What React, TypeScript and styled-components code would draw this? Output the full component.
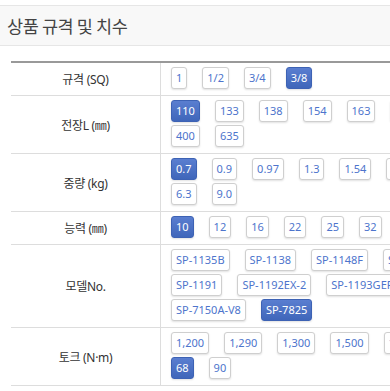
import React from "react";
import styled, { createGlobalStyle } from "styled-components";

const GlobalStyle = createGlobalStyle`
  html, body {
    margin: 0;
    padding: 0;
    background: #ffffff;
    overflow: hidden;
  }
  body {
    font-family: "Noto Sans", "Noto Sans CJK KR", sans-serif;
    color: #333333;
  }
`;

const Page = styled.div`
  width: 390px;
  padding-top: 5px;
  overflow: hidden;
`;

const TitleBar = styled.header`
  height: 39px;
  display: flex;
  align-items: center;
  padding-left: 7px;
  background: #f8f8f8;
  border-top: 1px solid #e6e6e6;
  border-bottom: 1px solid #e6e6e6;
`;

const Title = styled.h2`
  margin: 0;
  font-family: "Noto Sans CJK KR", sans-serif;
  font-size: 17.5px;
  font-weight: 400;
  letter-spacing: -0.4px;
  color: #444444;
`;

const SpecTable = styled.div`
  width: 573px;
  margin: 15px 0 0 11px;
  border-top: 2px solid #999999;
`;

const SpecRow = styled.div`
  display: grid;
  grid-template-columns: 150px 1fr;
  border-bottom: 1px solid #dddddd;
`;

const LabelCell = styled.div`
  display: flex;
  align-items: center;
  justify-content: center;
  border-right: 1px solid #dddddd;
  font-family: "Noto Sans", "Noto Sans CJK KR", sans-serif;
  font-size: 12px;
  color: #333333;
  letter-spacing: -0.3px;
`;

const ValueCell = styled.div`
  display: flex;
  flex-wrap: wrap;
  align-content: flex-start;
  gap: 3px 15px;
  padding: 4px 10px 6px 10px;
`;

const OptionButton = styled.button<{ $active?: boolean }>`
  height: 22px;
  padding: 0 4px;
  box-sizing: border-box;
  border-radius: 3px;
  font-family: "Noto Sans", sans-serif;
  font-size: 11px;
  line-height: 20px;
  white-space: nowrap;
  cursor: pointer;
  border: 1px solid ${(p) => (p.$active ? "#3d62b4" : "#cfcfcf")};
  background: ${(p) =>
    p.$active ? "linear-gradient(#5a7ed0, #3f66ba)" : "#ffffff"};
  color: ${(p) => (p.$active ? "#ffffff" : "#4d74cc")};
  box-shadow: 0 1px 2px rgba(0, 0, 0, 0.12);
`;

type Spec = { label: string; values: string[]; active: string };

const specs: Spec[] = [
  { label: "규격 (SQ)", values: ["1", "1/2", "3/4", "3/8"], active: "3/8" },
  {
    label: "전장L (㎜)",
    values: ["110", "133", "138", "154", "163", "175", "185", "210", "250", "400", "635"],
    active: "110",
  },
  {
    label: "중량 (kg)",
    values: ["0.7", "0.9", "0.97", "1.3", "1.54", "2.25", "3.5", "4.2", "5.15", "6.3", "9.0"],
    active: "0.7",
  },
  {
    label: "능력 (㎜)",
    values: ["10", "12", "16", "22", "25", "32", "40", "50", "63", "80"],
    active: "10",
  },
  {
    label: "모델No.",
    values: [
      "SP-1135B",
      "SP-1138",
      "SP-1148F",
      "SP-1150N",
      "SP-1162C",
      "SP-1191",
      "SP-1192EX-2",
      "SP-1193GEF",
      "SP-1195",
      "SP-1200A",
      "SP-7150A-V8",
      "SP-7825",
    ],
    active: "SP-7825",
  },
  {
    label: "토크 (N·m)",
    values: ["1,200", "1,290", "1,300", "1,500", "1,800", "2,000", "2,500", "45", "68", "90"],
    active: "68",
  },
];

export default function App() {
  return (
    <>
      <GlobalStyle />
      <Page>
        <TitleBar>
          <Title>상품 규격 및 치수</Title>
        </TitleBar>
        <SpecTable>
          {specs.map((spec) => (
            <SpecRow key={spec.label}>
              <LabelCell>{spec.label}</LabelCell>
              <ValueCell>
                {spec.values.map((v) => (
                  <OptionButton key={v} $active={v === spec.active}>
                    {v}
                  </OptionButton>
                ))}
              </ValueCell>
            </SpecRow>
          ))}
        </SpecTable>
      </Page>
    </>
  );
}
